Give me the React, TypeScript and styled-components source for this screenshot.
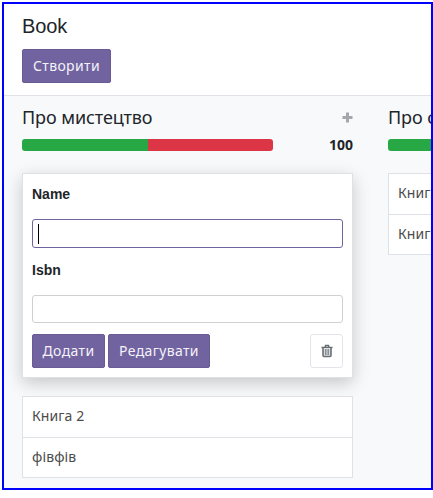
import React from 'react';
import styled, { createGlobalStyle } from 'styled-components';

const GlobalStyle = createGlobalStyle`
  * { box-sizing: border-box; }
  body {
    margin: 0;
    background: #fff;
    overflow: hidden;
    font-family: "Noto Sans", "Open Sans", sans-serif;
    font-size: 14px;
    color: #4c4c4c;
  }
`;

const Frame = styled.div`
  width: 431px;
  height: 488px;
  margin: 2px 0 0 2px;
  border: 2px solid #0000fe;
  background: #f8f9fb;
  overflow: hidden;
  display: flex;
  flex-direction: column;
`;

const Header = styled.header`
  flex: none;
  height: 92px;
  padding: 10px 18px 0;
  background: #fff;
  border-bottom: 1px solid #dfe2e6;
`;

const Title = styled.h1`
  margin: 0 0 10px;
  font: 400 20px/25px "Liberation Sans", sans-serif;
  letter-spacing: -0.1px;
  color: #212529;
`;

const Button = styled.button<{ $width: number }>`
  width: ${(p) => p.$width}px;
  height: 34px;
  padding: 0;
  border: 1px solid #6b5b95;
  border-radius: 2px;
  background: #7163a0;
  color: #f4f2f8;
  font: 400 14px/20px "Noto Sans", sans-serif;
  letter-spacing: 0.36px;
  white-space: nowrap;
`;

const IconButton = styled(Button)`
  display: flex;
  align-items: center;
  justify-content: center;
  margin-left: auto;
  border-color: #e2e5e9;
  border-radius: 3px;
  background: #fff;
  color: #6a6e73;
`;

const Board = styled.main`
  display: flex;
  gap: 35px;
  padding: 8px 0 0 18px;
`;

const Column = styled.section`
  flex: 0 0 331px;
`;

const ColumnHead = styled.div`
  display: flex;
  align-items: center;
  justify-content: space-between;
  height: 26px;
  color: #a3a6aa;
`;

const ColumnTitle = styled.h2`
  margin: 0;
  font: 400 18px/26px "Noto Sans", sans-serif;
  letter-spacing: -0.08px;
  color: #212529;
`;

const Summary = styled.div`
  display: flex;
  align-items: center;
  justify-content: space-between;
  height: 20px;
  margin-top: 5px;
  font-weight: 700;
  line-height: 20px;
  color: #212529;
`;

const Progress = styled.div`
  display: flex;
  width: 251px;
  height: 12px;
  border-radius: 3px;
  overflow: hidden;
`;

const Segment = styled.div<{ $color: string }>`
  flex: 1;
  background: ${(p) => p.$color};
`;

const QuickCreate = styled.form`
  height: 205px;
  margin: 18px 0;
  padding: 9px 9px 9px;
  border: 1px solid #dee2e6;
  background: #fff;
  box-shadow: 0 5px 16px rgba(0, 0, 0, 0.2);
`;

const Label = styled.label`
  display: block;
  height: 22px;
  font: 700 14px/22px "Liberation Sans", sans-serif;
  color: #212529;
`;

const Field = styled.div<{ $focused?: boolean; $height: number }>`
  height: ${(p) => p.$height}px;
  margin: 14px 0 11px;
  padding: 4px 5px;
  border: 1px solid ${(p) => (p.$focused ? '#7163a0' : '#ced0d3')};
  border-radius: 3px;
  background: #fff;
`;

const Caret = styled.div`
  width: 1px;
  height: 20px;
  background: #000;
`;

const Actions = styled.div`
  display: flex;
  gap: 3px;
`;

const Records = styled.ul<{ $top?: number }>`
  list-style: none;
  margin: ${(p) => p.$top ?? 0}px 0 0;
  padding: 0;
  border: 1px solid #dee2e6;
  background: #fff;
`;

const RecordItem = styled.li`
  height: 40px;
  padding: 0 9px;
  font-size: 14px;
  line-height: 38px;
  letter-spacing: 0.1px;

  & + & {
    border-top: 1px solid #dee2e6;
  }
`;

const PlusIcon = () => (
  <svg width="11" height="11" viewBox="0 0 11 11">
    <path d="M4 .5h3V4h3.5v3H7v3.5H4V7H.5V4H4z" fill="currentColor" />
  </svg>
);

const TrashIcon = () => (
  <svg width="12" height="14" viewBox="0 0 12 14" fill="none" stroke="currentColor">
    <path d="M.5 3.5h11M4 3.2l.6-1.7h2.8L8 3.2" strokeWidth="1.5" />
    <path d="M2 4v7.2c0 .8.4 1.3 1 1.3h6c.6 0 1-.5 1-1.3V4" fill="#dfe3e6" strokeWidth="1.6" />
    <path d="M4.4 5v6M6 5v6M7.6 5v6" strokeWidth=".8" />
  </svg>
);

type ColumnProps = { title: string; total: number; children: React.ReactNode };

const KanbanColumn = ({ title, total, children }: ColumnProps) => (
  <Column>
    <ColumnHead>
      <ColumnTitle>{title}</ColumnTitle>
      <PlusIcon />
    </ColumnHead>
    <Summary>
      <Progress>
        <Segment $color="#28a745" />
        <Segment $color="#dc3545" />
      </Progress>
      <span>{total}</span>
    </Summary>
    {children}
  </Column>
);

export default function App() {
  return (
    <>
      <GlobalStyle />
      <Frame>
        <Header>
          <Title>Book</Title>
          <Button $width={89}>Створити</Button>
        </Header>
        <Board>
          <KanbanColumn title="Про мистецтво" total={100}>
            <QuickCreate>
              <Label>Name</Label>
              <Field $focused $height={29}>
                <Caret />
              </Field>
              <Label>Isbn</Label>
              <Field $height={28} />
              <Actions>
                <Button type="button" $width={73}>Додати</Button>
                <Button type="button" $width={102}>Редагувати</Button>
                <IconButton type="button" $width={33} aria-label="Видалити">
                  <TrashIcon />
                </IconButton>
              </Actions>
            </QuickCreate>
            <Records>
              <RecordItem>Книга 2</RecordItem>
              <RecordItem>фівфів</RecordItem>
            </Records>
          </KanbanColumn>
          <KanbanColumn title="Про скарби" total={100}>
            <Records $top={18}>
              <RecordItem>Книга 1</RecordItem>
              <RecordItem>Книга 3</RecordItem>
            </Records>
          </KanbanColumn>
        </Board>
      </Frame>
    </>
  );
}
